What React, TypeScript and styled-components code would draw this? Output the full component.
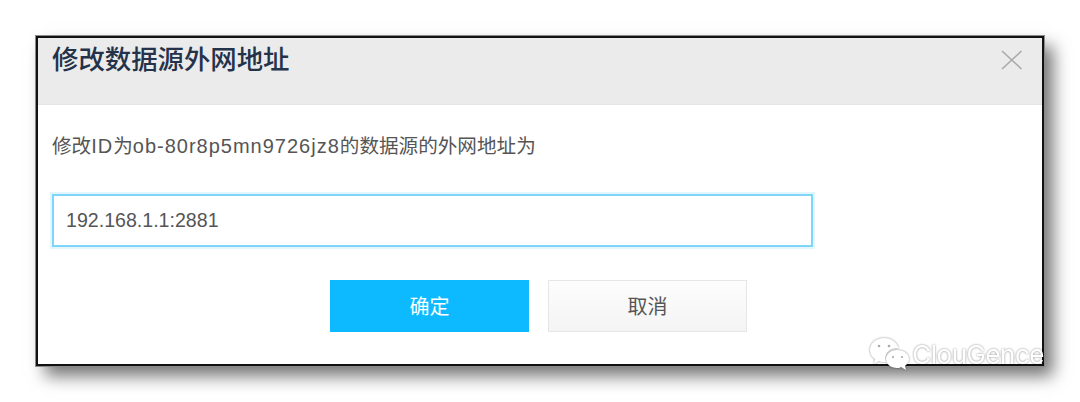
import styled, { createGlobalStyle } from 'styled-components'

const GlobalStyle = createGlobalStyle`
  html, body {
    margin: 0;
    padding: 0;
    background: #fff;
  }
  * {
    box-sizing: border-box;
  }
`

const Page = styled.div`
  position: relative;
  width: 1080px;
  height: 402px;
  padding: 36px 36px 0;
  overflow: hidden;
  font-family: 'Liberation Sans', 'Noto Sans CJK SC', sans-serif;
`

const Dialog = styled.div`
  width: 1008px;
  height: 330px;
  border: 2px solid #111;
  outline: 1px solid #8a8a8a;
  background: #fff;
  box-shadow: 9px 10px 16px rgba(0, 0, 0, 0.55);
`

const Header = styled.div`
  display: flex;
  justify-content: space-between;
  align-items: flex-start;
  height: 67px;
  padding: 5px 19px 0 14px;
  background: #ebebeb;
  border-bottom: 1px solid #e4e4e4;
`

const Title = styled.div`
  font-size: 26.4px;
  line-height: 34px;
  font-weight: 500;
  color: #24324a;
`

const CloseIcon = styled.svg`
  width: 23px;
  height: 22px;
  margin-top: 6px;
  stroke: #a9a9a9;
  stroke-width: 1.6;
  fill: none;
`

const Body = styled.div`
  display: flex;
  flex-direction: column;
  padding: 29px 14px 0;
`

const Message = styled.div`
  font-size: 19.6px;
  line-height: 24px;
  color: #555;
`

const Code = styled.span`
  font-size: 20px;
  letter-spacing: 1px;
`

const AddressInput = styled.input`
  width: 761px;
  height: 53px;
  margin-top: 36px;
  padding: 0 12px 0 12px;
  border: 2px solid #7fd6f8;
  outline: 2px solid #e3f5fd;
  background: #fff;
  font-family: inherit;
  font-size: 19.6px;
  color: #555;
`

const Actions = styled.div`
  display: flex;
  gap: 19px;
  margin-top: 33px;
  padding-left: 278px;
`

const Button = styled.button<{ $primary?: boolean }>`
  width: 199px;
  height: 52px;
  padding: 0 0 2px;
  border: 1px solid ${(p) => (p.$primary ? '#0dbaff' : '#e6e6e8')};
  background: ${(p) => (p.$primary ? '#0dbaff' : 'linear-gradient(#fdfdfd, #f4f4f4)')};
  color: ${(p) => (p.$primary ? '#fff' : '#555')};
  font-family: inherit;
  font-size: 20px;
`

const Watermark = styled.div`
  position: absolute;
  right: 36px;
  top: 337px;
  display: flex;
  align-items: center;
  gap: 3px;
  filter: drop-shadow(0 0 1px rgba(0, 0, 0, 0.45));
`

const WatermarkText = styled.span`
  font-family: 'Inter', sans-serif;
  font-size: 26px;
  line-height: 34px;
  font-weight: 400;
  letter-spacing: -0.5px;
  color: #fff;
`

const App = () => {
  return (
    <Page>
      <GlobalStyle />
      <Dialog>
        <Header>
          <Title>修改数据源外网地址</Title>
          <CloseIcon viewBox="0 0 23 22">
            <path d="M2 2 L21.500 20 M21.500 2 L2 20" />
          </CloseIcon>
        </Header>
        <Body>
          <Message>
            修改<Code>ID</Code>为<Code>ob-80r8p5mn9726jz8</Code>的数据源的外网地址为
          </Message>
          <AddressInput readOnly value="192.168.1.1:2881" />
          <Actions>
            <Button $primary>确定</Button>
            <Button>取消</Button>
          </Actions>
        </Body>
      </Dialog>
      <Watermark>
        <svg width="40" height="36" viewBox="0 0 40 36" fill="#fff">
          <path d="M15 1C7 1 1 6 1 13c0 4 2 7 5 9l-1 5 5-3c2 1 3 1 5 1 1 0 2 0 2-.2-.4-1-.6-2.500-.6-3.800 0-6 5.600-10 12-10h1C28 5 22 1 15 1z" />
          <path d="M28 13c-6 0-11 4-11 9s5 9 11 9c1 0 3 0 4-1l5 3-1-4c2-2 4-4 4-7 0-5-5-9-12-9z" />
          <g fill="#aaa">
            <circle cx="10" cy="9" r="1.300" />
            <circle cx="20" cy="9" r="1.300" />
            <circle cx="24" cy="20" r="1.100" />
            <circle cx="33" cy="20" r="1.100" />
          </g>
        </svg>
        <WatermarkText>ClouGence</WatermarkText>
      </Watermark>
    </Page>
  )
}

export default App
